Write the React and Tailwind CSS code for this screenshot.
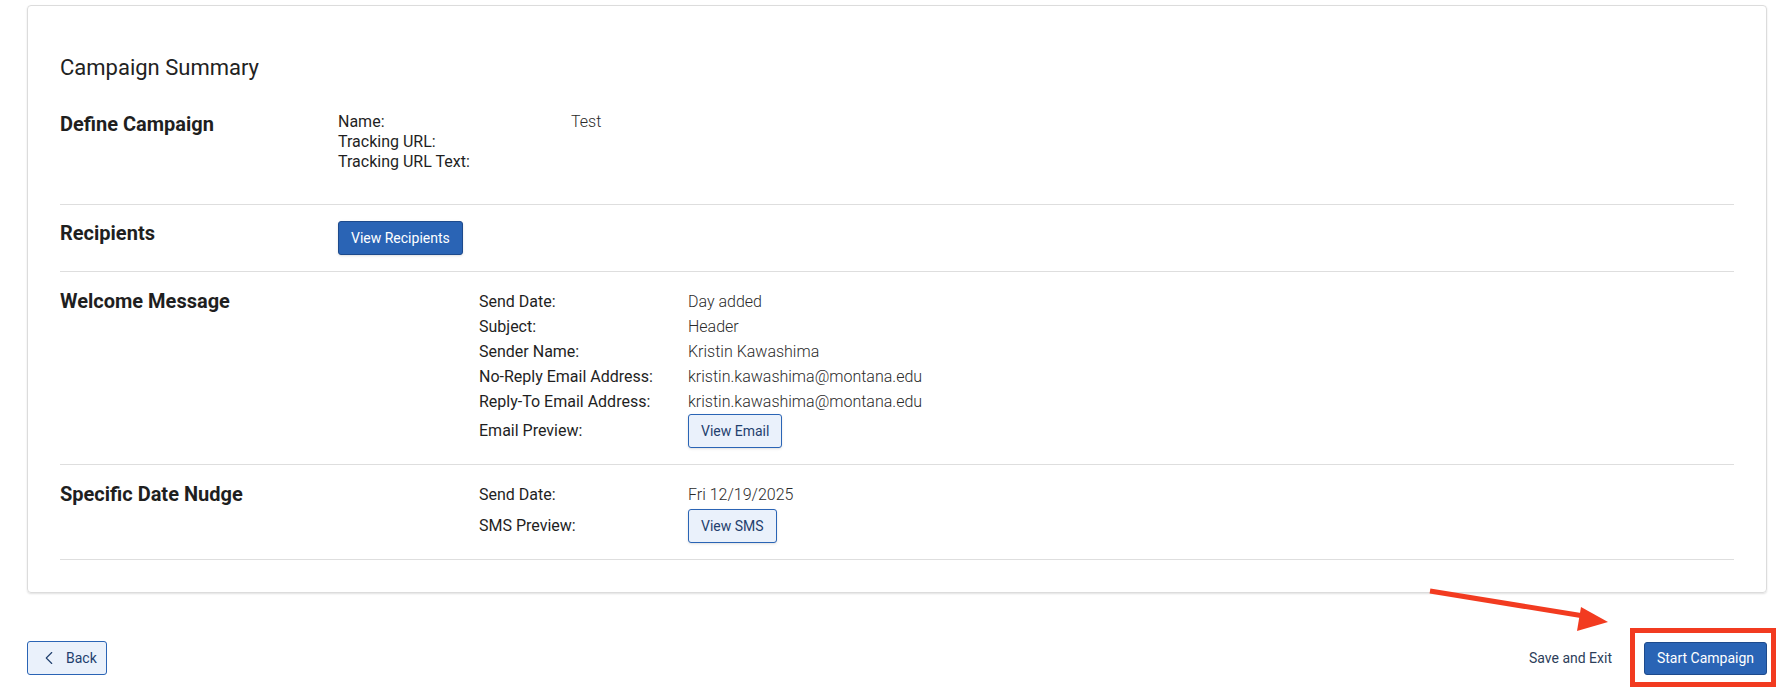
import {ChevronLeft} from "lucide-react";

const font = {fontFamily: "Roboto, 'Liberation Sans', sans-serif"};

const SectionTitle = ({children}) => (
    <h3 className="w-[278px] shrink-0 text-[20px] leading-6 font-bold text-[#1f1f1f]">{children}</h3>
);

const Row = ({label, children}) => (
    <div className="flex">
        <div className="w-[209px] shrink-0 text-[16px] leading-[25px] text-[#1f1f1f]">{label}</div>
        <div className="text-[16px] leading-[25px] font-light text-[#2b2b2b]">{children}</div>
    </div>
);

const GhostButton = ({children}) => (
    <button className="h-[34px] px-3 border border-[#2a64b5] rounded-[3px] bg-[#eaf1fb] text-[14px] text-[#1f3f6e] shadow-sm">
        {children}
    </button>
);

export default function App() {
    return (
        <div className="relative h-[689px] bg-white pl-[27px] pr-[13px] pt-[5px]" style={font}>
            <div className="border border-[#dcdcdc] rounded-[4px] shadow-[0_1px_2px_rgba(0,0,0,0.12)] px-8 pt-[48px] pb-8">
                <h2 className="text-[22px] leading-7 text-[#222]">Campaign Summary</h2>

                {/* Define campaign */}
                <div className="flex pt-[30px] pb-[32px] border-b border-[#dedede]">
                    <SectionTitle>Define Campaign</SectionTitle>
                    <div className="flex flex-col text-[16px] leading-[20px]">
                        <div className="flex">
                            <span className="w-[233px] text-[#1f1f1f]">Name:</span>
                            <span className="font-light text-[#2b2b2b]">Test</span>
                        </div>
                        <span className="text-[#1f1f1f]">Tracking URL:</span>
                        <span className="text-[#1f1f1f]">Tracking URL Text:</span>
                    </div>
                </div>

                {/* Recipients */}
                <div className="flex py-4 border-b border-[#dedede]">
                    <SectionTitle>Recipients</SectionTitle>
                    <button className="h-[34px] px-3 border border-[#1d4a8c] rounded-[3px] bg-[#2a64b5] text-[14px] text-white shadow-sm">
                        View Recipients
                    </button>
                </div>

                {/* Welcome message */}
                <div className="flex pt-[17px] pb-4 border-b border-[#dedede]">
                    <div className="w-[419px] shrink-0">
                        <SectionTitle>Welcome Message</SectionTitle>
                    </div>
                    <div className="flex flex-col">
                        <Row label="Send Date:">Day added</Row>
                        <Row label="Subject:">Header</Row>
                        <Row label="Sender Name:">Kristin Kawashima</Row>
                        <Row label="No-Reply Email Address:">kristin.kawashima@montana.edu</Row>
                        <Row label="Reply-To Email Address:">kristin.kawashima@montana.edu</Row>
                        <div className="flex items-center">
                            <div className="w-[209px] shrink-0 text-[16px] text-[#1f1f1f]">Email Preview:</div>
                            <GhostButton>View Email</GhostButton>
                        </div>
                    </div>
                </div>

                {/* Specific date nudge */}
                <div className="flex pt-[17px] pb-4 border-b border-[#dedede]">
                    <div className="w-[419px] shrink-0">
                        <SectionTitle>Specific Date Nudge</SectionTitle>
                    </div>
                    <div className="flex flex-col">
                        <Row label="Send Date:">Fri 12/19/2025</Row>
                        <div className="flex items-center mt-[2px]">
                            <div className="w-[209px] shrink-0 text-[16px] text-[#1f1f1f]">SMS Preview:</div>
                            <GhostButton>View SMS</GhostButton>
                        </div>
                    </div>
                </div>
            </div>

            {/* Footer actions */}
            <div className="flex items-center justify-between mt-12">
                <button className="flex items-center gap-[6px] h-[34px] w-[80px] pl-[12px] border border-[#2a64b5] rounded-[3px] bg-[#eaf1fb] text-[14px] text-[#1f3f6e]">
                    <ChevronLeft className="h-[22px] w-[22px] -ml-[2px]" strokeWidth={1.2} />
                    Back
                </button>
                <div className="flex items-center gap-[32px]">
                    <button className="text-[14px] text-[#2d3e5a]">Save and Exit</button>
                    <div className="relative">
                        <button className="h-[33px] w-[123px] border border-[#1d4a8c] rounded-[3px] bg-[#2a64b5] text-[14px] text-white">
                            Start Campaign
                        </button>
                        <span className="absolute -left-[14px] -right-[9px] -top-[14px] -bottom-[12px] border-[5px] border-[#f23b20] pointer-events-none" />
                    </div>
                </div>
            </div>

            {/* annotation arrow */}
            <svg className="absolute left-[1425px] top-[585px] pointer-events-none" width="190" height="50" viewBox="0 0 190 50">
                <line x1="5" y1="6" x2="165" y2="32" stroke="#f23b20" strokeWidth="5" />
                <polygon points="183,37 156,22 152,46" fill="#f23b20" />
            </svg>
        </div>
    );
}
